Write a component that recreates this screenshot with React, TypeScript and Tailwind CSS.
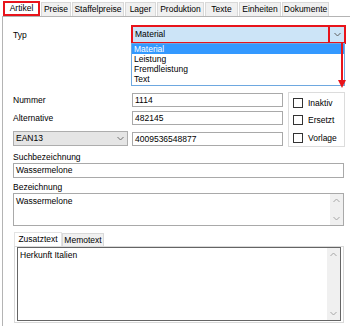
import React from "react";

const Chevron = ({ up = false, color = "#606060" }: { up?: boolean; color?: string }) => (
  <svg width="7" height="5" viewBox="0 0 7 5" className="block">
    <polyline
      points={up ? "0.5,4 3.5,1 6.5,4" : "0.5,1 3.5,4 6.5,1"}
      fill="none"
      stroke={color}
      strokeWidth="1"
    />
  </svg>
);

const ScrollBar = ({ h }: { h: string }) => (
  <div className={`w-[13px] ${h} bg-[#f0f0f0] flex flex-col items-center justify-between py-[4px]`}>
    <Chevron up color="#a6a6a6" />
    <Chevron color="#a6a6a6" />
  </div>
);

const tabs = [
  { t: "Preise", w: "w-[30px]" },
  { t: "Staffelpreise", w: "w-[52px]" },
  { t: "Lager", w: "w-[31px]" },
  { t: "Produktion", w: "w-[47px]" },
  { t: "Texte", w: "w-[33px]" },
  { t: "Einheiten", w: "w-[42px]" },
  { t: "Dokumente", w: "w-[47px]" },
];

const Check = ({ label, mt }: { label: string; mt: string }) => (
  <div className={`flex items-center ${mt}`}>
    <div className="w-[10px] h-[10px] border border-[#333333] bg-white ml-[4px]" />
    <span className="ml-[5px] leading-none">{label}</span>
  </div>
);

export default function App() {
  return (
    <div className="w-[350px] h-[326px] bg-white overflow-hidden relative font-['Liberation_Sans',Arial,sans-serif] text-[8.5px] text-black">
      {/* Tab strip */}
      <div className="flex h-[16px]">
        <div className="ml-[3px] mt-[1px] h-[15px] w-[37px] border-2 border-[#e8141b] bg-white flex items-center justify-center z-10">
          <span className="leading-none">Artikel</span>
        </div>
        {tabs.map((tb) => (
          <div
            key={tb.t}
            className={`${tb.w} ml-[1px] mt-[2px] h-[14px] border border-[#d9d9d9] border-b-0 bg-[#f0f0f0] flex items-center justify-center`}
          >
            <span className="leading-none">{tb.t}</span>
          </div>
        ))}
      </div>

      {/* Body */}
      <div className="ml-[2px] h-[310px] border-l border-t border-[#b4b4b4] pl-[10px]">
        {/* Typ row */}
        <div className="flex mt-[8px] h-[19px]">
          <div className="w-[118px] pt-[6px] leading-none">Typ</div>
          <div className="w-[215px] h-[19px] border-2 border-[#e8141b] bg-[#cce4f7] flex">
            <div className="flex-1 flex items-center pl-[2px] leading-none">Material</div>
            <div className="w-[16px] border-l-2 border-[#e8141b] flex items-center justify-center">
              <Chevron />
            </div>
          </div>
        </div>

        {/* Middle section */}
        <div className="flex mt-[48px]">
          <div className="w-[270px] pt-[1px]">
            <div className="flex h-[14px]">
              <div className="w-[119px] flex items-center leading-none">Nummer</div>
              <div className="w-[151px] h-[14px] border border-[#a9a9a9] flex items-center pl-[2px] leading-none">1114</div>
            </div>
            <div className="flex h-[14px] mt-[4px]">
              <div className="w-[119px] flex items-center leading-none">Alternative</div>
              <div className="w-[151px] h-[14px] border border-[#a9a9a9] flex items-center pl-[2px] leading-none">482145</div>
            </div>
            <div className="flex mt-[6px]">
              <div className="w-[115px] h-[15px] border border-[#adadad] bg-[#e5e5e5] flex items-center justify-between pl-[2px] pr-[3px]">
                <span className="leading-none">EAN13</span>
                <Chevron color="#707070" />
              </div>
              <div className="ml-[4px] mt-[1px] w-[151px] h-[14px] border border-[#a9a9a9] flex items-center pl-[2px] leading-none">4009536548877</div>
            </div>
          </div>
          <div className="ml-[5px] w-[57px] h-[55px] border border-[#dcdcdc] flex flex-col">
            <Check label="Inaktiv" mt="mt-[5px]" />
            <Check label="Ersetzt" mt="mt-[7px]" />
            <Check label="Vorlage" mt="mt-[8px]" />
          </div>
        </div>

        {/* Suchbezeichnung */}
        <div className="mt-[6px] h-[10px] leading-none">Suchbezeichnung</div>
        <div className="w-[331px] h-[15px] border border-[#a9a9a9] flex items-center pl-[2px] leading-none">Wassermelone</div>

        {/* Bezeichnung */}
        <div className="mt-[5px] h-[10px] leading-none">Bezeichnung</div>
        <div className="w-[331px] h-[33px] border border-[#a9a9a9] flex">
          <div className="flex-1 pl-[2px] pt-[3px] leading-none">Wassermelone</div>
          <ScrollBar h="h-[31px]" />
        </div>

        {/* Inner tabs */}
        <div className="ml-[1px] mt-[6px] flex h-[14px]">
          <div className="w-[48px] h-[14px] border border-b-0 border-[#e3e3e3] bg-white flex items-center justify-center">
            <span className="leading-none">Zusatztext</span>
          </div>
          <div className="w-[42px] h-[13px] mt-[1px] border border-b-0 border-[#d9d9d9] bg-[#f0f0f0] flex items-center justify-center">
            <span className="leading-none">Memotext</span>
          </div>
        </div>
        <div className="ml-[1px] w-[330px] h-[77px] border border-[#d9d9d9] pl-[2px] pr-[2px] pb-[1px]">
          <div className="w-full h-full border border-[#646464] flex">
            <div className="flex-1 pl-[2px] pt-[3px] leading-none">Herkunft Italien</div>
            <ScrollBar h="h-full" />
          </div>
        </div>
      </div>

      {/* Dropdown list overlay */}
      <div className="absolute left-[131px] top-[43px] w-[214px] h-[43px] border border-[#6ea8e0] bg-white flex flex-col">
        <div className="h-[10px] bg-[#3399ff] text-white pl-[2px] flex items-center leading-none">Material</div>
        <div className="h-[10px] pl-[2px] flex items-center leading-none">Leistung</div>
        <div className="h-[10px] pl-[2px] flex items-center leading-none">Fremdleistung</div>
        <div className="h-[10px] pl-[2px] flex items-center leading-none">Text</div>
      </div>

      {/* Red annotation arrow */}
      <svg className="absolute left-[336px] top-[43px]" width="12" height="47" viewBox="0 0 12 47">
        <line x1="6" y1="0" x2="6" y2="38" stroke="#e8141b" strokeWidth="2" />
        <polygon points="2,37 10,37 6,45" fill="#e8141b" />
      </svg>
    </div>
  );
}
